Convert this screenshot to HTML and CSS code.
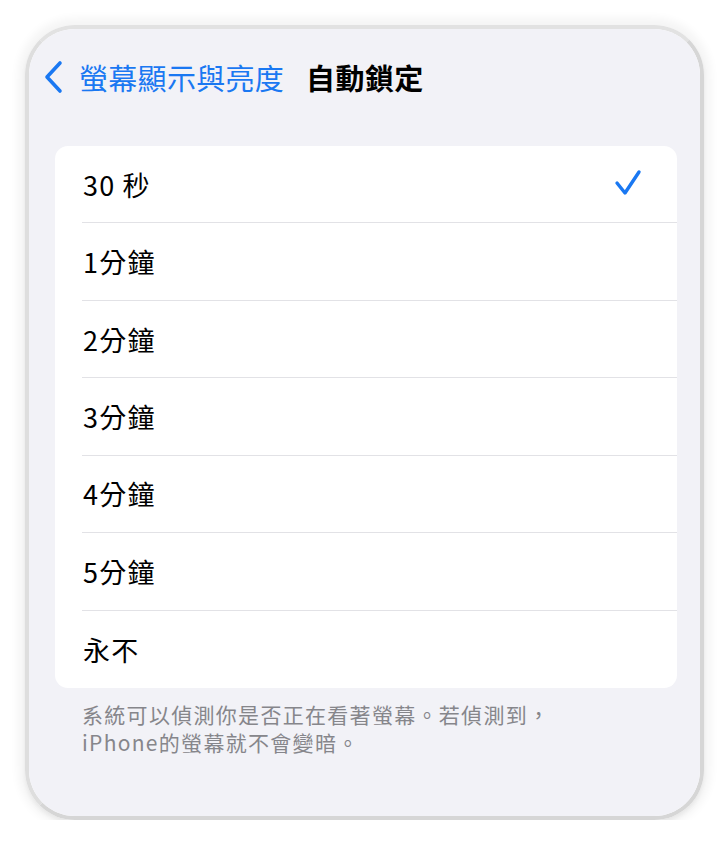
FILE: index.html
```html
<!DOCTYPE html>
<html lang="zh-Hant">
<head>
    <meta charset="UTF-8">
    <title>自動鎖定</title>
    <link rel="stylesheet" href="styles.css">
</head>
<body>
    <div class="phone">
        <div class="screen">
            <div class="nav">
                <a class="back" href="#">
                    <svg class="chevron" width="22" height="34" viewBox="0 0 22 34">
                        <path d="M17 3 L4 17 L17 31" fill="none" stroke="#1a78f2" stroke-width="3.6" stroke-linecap="round" stroke-linejoin="round"/>
                    </svg>
                    <span>螢幕顯示與亮度</span>
                </a>
                <h1>自動鎖定</h1>
            </div>

            <ul class="options">
                <li class="selected"><span>30 秒</span>
                    <svg class="check" width="28" height="28" viewBox="0 0 28 28">
                        <path d="M3 14 L11 24 L25 3" fill="none" stroke="#1a78f2" stroke-width="3.4" stroke-linecap="round" stroke-linejoin="round"/>
                    </svg>
                </li>
                <li><span>1分鐘</span></li>
                <li><span>2分鐘</span></li>
                <li><span>3分鐘</span></li>
                <li><span>4分鐘</span></li>
                <li><span>5分鐘</span></li>
                <li><span>永不</span></li>
            </ul>

            <p class="note">系統可以偵測你是否正在看著螢幕。若偵測到，<br>iPhone的螢幕就不會變暗。</p>
        </div>
    </div>
</body>
</html>
```

FILE: styles.css
```css
body {
    margin: 0;
    background: #fff;
    font-family: "Noto Sans CJK TC", "Noto Sans", sans-serif;
}

.phone {
    margin: 25px 0 0 25px;
    width: 679px;
    height: 795px;
    border: 4px solid #d6d6d6;
    border-top-color: #e2e2e2;
    border-left-color: #dedede;
    border-radius: 50px;
    box-shadow: 0 0 8px 7px rgba(0,0,0,0.045), 0 3px 4px rgba(0,0,0,0.06);
    box-sizing: border-box;
    overflow: hidden;
}

.screen {
    height: 100%;
    background: #f2f2f7;
    padding-top: 28px;
    box-sizing: border-box;
}

.nav {
    display: flex;
    align-items: center;
    height: 40px;
    padding-left: 14px;
}

.back {
    display: flex;
    align-items: center;
    color: #1a78f2;
    text-decoration: none;
    font-size: 29px;
    letter-spacing: 0.3px;
}

.chevron {
    margin-right: 14px;
}

.nav h1 {
    margin: 0 0 0 22px;
    font-size: 29px;
    font-weight: 700;
    color: #000;
    letter-spacing: 0.4px;
}

.options {
    list-style: none;
    margin: 49px 0 0 26px;
    padding: 0 0 0 27px;
    width: 622px;
    background: #fff;
    border-radius: 13px;
    box-sizing: border-box;
}

.options li {
    display: flex;
    align-items: center;
    justify-content: space-between;
    height: 77.43px;
    padding-right: 35px;
    border-bottom: 1px solid #e2e2e6;
    box-sizing: border-box;
    font-size: 27px;
    color: #000;
}

.options li:last-child {
    border-bottom: none;
}

.options li span {
    margin-left: 1px;
    letter-spacing: 1.2px;
}

.check {
    margin-top: -2px;
}

.note {
    margin: 12px 0 0 53px;
    font-size: 21px;
    line-height: 28px;
    color: #86868b;
    letter-spacing: 1.3px;
}
```
